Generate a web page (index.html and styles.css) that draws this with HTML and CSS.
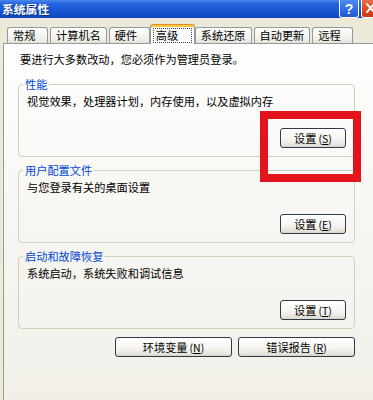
FILE: index.html
```html
<!DOCTYPE html>
<html lang="zh-CN">
<head>
<meta charset="utf-8">
<title>系统属性</title>
<link rel="stylesheet" href="styles.css">
</head>
<body>
<div class="window">
  <div class="titlebar">
    <span class="title">系统属性</span>
    <div class="caption-buttons">
      <span class="cap-btn help">?</span>
      <span class="cap-btn close"><svg width="20" height="17" viewBox="0 0 20 17"><path d="M5 3 L14 13 M14 3 L5 13" stroke="#fff" stroke-width="2.2" fill="none"/></svg></span>
    </div>
  </div>
  <div class="tabs">
    <div class="tab">常规</div>
    <div class="tab">计算机名</div>
    <div class="tab">硬件</div>
    <div class="tab active"><span class="focus">高级</span></div>
    <div class="tab">系统还原</div>
    <div class="tab">自动更新</div>
    <div class="tab">远程</div>
  </div>
  <div class="page">
    <p class="intro">要进行大多数改动，您必须作为管理员登录。</p>
    <fieldset class="group">
      <legend>性能</legend>
      <p>视觉效果，处理器计划，内存使用，以及虚拟内存</p>
      <div class="row"><button class="btn">设置<span class="acc">(<u>S</u>)</span></button></div>
    </fieldset>
    <fieldset class="group">
      <legend>用户配置文件</legend>
      <p>与您登录有关的桌面设置</p>
      <div class="row"><button class="btn">设置<span class="acc">(<u>E</u>)</span></button></div>
    </fieldset>
    <fieldset class="group">
      <legend>启动和故障恢复</legend>
      <p>系统启动，系统失败和调试信息</p>
      <div class="row"><button class="btn">设置<span class="acc">(<u>T</u>)</span></button></div>
    </fieldset>
    <div class="bottom-row">
      <button class="btn wide">环境变量<span class="acc">(<u>N</u>)</span></button>
      <button class="btn wide">错误报告<span class="acc">(<u>R</u>)</span></button>
    </div>
  </div>
  <div class="highlight"></div>
</div>
</body>
</html>
```

FILE: styles.css
```css
* { box-sizing: border-box; }
html, body { margin: 0; padding: 0; }
body {
  width: 373px;
  height: 400px;
  overflow: hidden;
  background: #ECE9D8;
  font-family: "Noto Sans CJK SC", "Noto Sans", sans-serif;
  font-size: 11.2px;
  color: #000;
}
.window {
  position: relative;
  width: 373px;
  height: 400px;
  overflow: hidden;
  background: #ECE9D8;
}
.titlebar {
  height: 18px;
  display: flex;
  justify-content: space-between;
  align-items: flex-start;
  background: linear-gradient(#4A88EE 0%, #2263DB 22%, #1655D0 65%, #0D47BE 100%);
}
.title {
  color: #fff;
  font-weight: bold;
  font-size: 11.8px;
  line-height: 17px;
  padding-left: 2px;
  text-shadow: 1px 1px 0 #0B2F85;
}
.caption-buttons {
  display: flex;
  gap: 2px;
  margin-right: -8px;
}
.cap-btn {
  width: 20px;
  height: 18px;
  border: 1px solid #fff;
  border-top: none;
  border-radius: 0 0 3px 3px;
  display: flex;
  align-items: center;
  justify-content: center;
}
.help {
  background: linear-gradient(#4E8DF2, #2D6BE3 60%, #2258D0);
  color: #fff;
  font-family: "Liberation Sans", sans-serif;
  font-weight: bold;
  font-size: 14px;
  line-height: 16px;
}
.close {
  background: linear-gradient(#E9714B, #D9461F 60%, #C83A16);
}
.tabs {
  height: 25px;
  display: flex;
  align-items: flex-end;
  gap: 2px;
  padding-left: 7px;
}
.tab {
  min-width: 41px;
  height: 16px;
  padding: 0 5px;
  border: 1px solid #919B9C;
  border-bottom: none;
  border-radius: 3px 3px 0 0;
  background: linear-gradient(#FFFFFF, #F1F0EA 70%, #E4E2D8);
  line-height: 14px;
  white-space: nowrap;
}
.tab.active {
  position: relative;
  z-index: 2;
  min-width: 45px;
  height: 20px;
  margin: 0 -2px -1px;
  padding: 1px 2px 0 2px;
  border-top: 1px solid #E68B2C;
  box-shadow: inset 0 2px 0 #FFC73C;
  background: #FCFCFE;
}
.focus {
  display: block;
  margin-top: 2px;
  height: 15px;
  padding-left: 2px;
  border: 1px dotted #444;
  line-height: 13px;
}
.page {
  width: 380px;
  height: 360px;
  margin-left: 3px;
  padding: 8px 27px 0 14px;
  border: 1px solid #919B9C;
  background: linear-gradient(#FEFEFE, #F7F6F2 50%, #F1EFE8);
}
.intro {
  margin: 0 0 11px 2px;
  line-height: 14px;
}
.group {
  margin: 0 0 6px 0;
  min-width: 0;
  border: 1px solid #D0D0BF;
  border-radius: 4px;
  padding: 3px 8px 8px 8px;
}
.group legend {
  color: #0046D5;
  padding: 0 2px;
  margin-left: -4px;
  line-height: 14px;
}
.group p {
  margin: 0;
  line-height: 14px;
}
.row {
  display: flex;
  justify-content: flex-end;
  margin-top: 20px;
}
.btn {
  width: 66px;
  height: 20px;
  padding: 0;
  border: 1px solid #2E3B4C;
  border-radius: 3px;
  background: linear-gradient(#FFFFFF, #F6F5F1 55%, #E8E6DE 85%, #D8D4C8);
  font-family: inherit;
  font-size: 11.2px;
  line-height: 16px;
  color: #000;
  white-space: nowrap;
}
.acc {
  margin-left: 2px;
  font-size: 10.5px;
}
.btn.wide {
  width: 117px;
}
.bottom-row {
  display: flex;
  justify-content: flex-end;
  gap: 6px;
  margin-top: 8px;
}
.highlight {
  position: absolute;
  left: 260px;
  top: 111px;
  width: 101px;
  height: 71px;
  border: 8px solid #E3141C;
}
```
